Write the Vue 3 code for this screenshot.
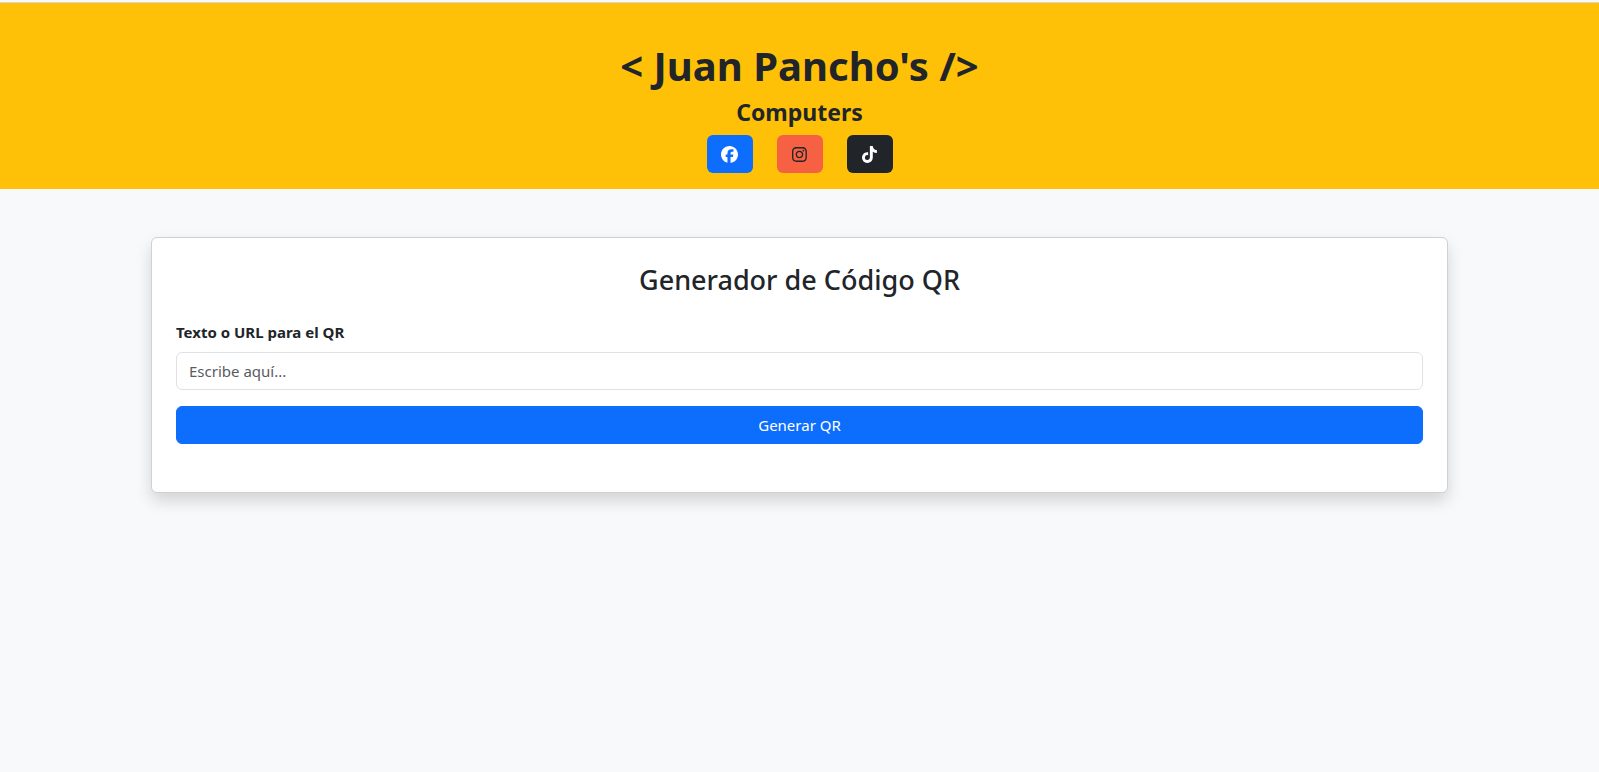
<script setup>
import { ref } from 'vue'

const text = ref('')

const links = [
  {
    name: 'Facebook',
    tone: 'blue',
    box: '0 0 512 512',
    path: 'M512 256C512 114.6 397.4 0 256 0S0 114.6 0 256C0 376 82.7 476.8 194.2 504.5V334.2H141.4V256h52.8V222.3c0-87.1 39.4-127.5 125-127.5c16.2 0 44.2 3.2 55.7 6.4V172c-6-.6-16.5-1-29.6-1c-42 0-58.2 15.9-58.2 57.2V256h83.6l-14.4 78.2H287V510.1C413.8 494.8 512 386.9 512 256h0z'
  },
  {
    name: 'Instagram',
    tone: 'coral',
    box: '0 0 448 512',
    path: 'M224.1 141c-63.6 0-114.9 51.3-114.9 114.9s51.3 114.9 114.9 114.9S339 319.5 339 255.9 287.7 141 224.1 141zm0 189.6c-41.1 0-74.7-33.5-74.7-74.7s33.5-74.7 74.7-74.7 74.7 33.5 74.7 74.7-33.6 74.7-74.7 74.7zm146.4-194.3c0 14.9-12 26.8-26.8 26.8-14.9 0-26.8-12-26.8-26.8s12-26.8 26.8-26.8 26.8 12 26.8 26.8zm76.1 27.2c-1.7-35.9-9.9-67.7-36.2-93.9-26.2-26.2-58-34.4-93.9-36.2-37-2.1-147.9-2.1-184.9 0-35.8 1.7-67.6 9.9-93.9 36.1s-34.4 58-36.2 93.9c-2.1 37-2.1 147.9 0 184.9 1.7 35.9 9.9 67.7 36.2 93.9s58 34.4 93.9 36.2c37 2.1 147.9 2.1 184.9 0 35.9-1.7 67.7-9.9 93.9-36.2 26.2-26.2 34.4-58 36.2-93.9 2.1-37 2.1-147.8 0-184.8zM398.8 388c-7.8 19.6-22.9 34.7-42.6 42.6-29.5 11.7-99.5 9-132.1 9s-102.7 2.6-132.1-9c-19.6-7.8-34.7-22.9-42.6-42.6-11.7-29.5-9-99.5-9-132.1s-2.6-102.7 9-132.1c7.8-19.6 22.9-34.7 42.6-42.6 29.5-11.7 99.5-9 132.1-9s102.7-2.6 132.1 9c19.6 7.8 34.7 22.9 42.6 42.6 11.7 29.5 9 99.5 9 132.1s2.7 102.7-9 132.1z'
  },
  {
    name: 'TikTok',
    tone: 'dark',
    box: '0 0 448 512',
    path: 'M448 209.9a210.1 210.1 0 0 1 -122.8-39.3V349.4A162.6 162.6 0 1 1 185 188.3V278.2a74.6 74.6 0 1 0 52.2 71.2V0l88 0a121.2 121.2 0 0 0 1.9 22.2h0A122.2 122.2 0 0 0 381 102.4a121.4 121.4 0 0 0 67 20.1z'
  }
]
</script>

<template>
  <div class="page">
    <header class="banner">
      <h1 class="brand">&lt; Juan Pancho's /&gt;</h1>
      <p class="tagline">Computers</p>
      <nav class="social">
        <a v-for="link in links" :key="link.name" href="#" class="social-link" :class="link.tone" :aria-label="link.name">
          <svg class="icon" :viewBox="link.box" aria-hidden="true"><path :d="link.path" /></svg>
        </a>
      </nav>
    </header>

    <main class="container">
      <form class="card" @submit.prevent>
        <h2 class="title">Generador de Código QR</h2>
        <label class="label" for="qr-text">Texto o URL para el QR</label>
        <input id="qr-text" v-model="text" class="field" type="text" placeholder="Escribe aquí..." />
        <button class="submit" type="submit">Generar QR</button>
      </form>
    </main>
  </div>
</template>

<style>
body {
  margin: 0;
  background: #f8f9fa;
}
</style>

<style scoped>
.page,
.page * {
  box-sizing: border-box;
}

.page {
  min-height: 100vh;
  border-top: 2px solid #f8f8f8;
  background: #f8f9fa;
  color: #212529;
  font-family: "Segoe UI", "Noto Sans", "Open Sans", sans-serif;
  font-size: 15px;
  line-height: 24px;
}

.banner {
  display: flex;
  flex-direction: column;
  align-items: center;
  gap: 8px;
  padding: 40px 16px 16px;
  border-top: 1px solid #dcd6cc;
  background: #ffc107;
}

.brand,
.tagline,
.title {
  margin: 0;
  text-align: center;
}

.brand {
  font-size: 40px;
  font-weight: 700;
  line-height: 46px;
}

.tagline {
  font-size: 23px;
  font-weight: 700;
  line-height: 30px;
}

.social {
  display: flex;
  gap: 24px;
}

.social-link {
  display: flex;
  align-items: center;
  justify-content: center;
  width: 46px;
  height: 38px;
  border-radius: 6px;
}

.blue {
  background: #0d6efd;
  color: #fff;
}

.coral {
  background: #f66144;
  color: #212529;
}

.dark {
  background: #212529;
  color: #fff;
}

.icon {
  height: 17px;
  fill: currentColor;
}

.container {
  max-width: 1321px;
  margin: 0 auto;
  padding: 48px 12px;
}

.card {
  display: flex;
  flex-direction: column;
  padding: 24px 24px 48px;
  border: 1px solid #d0d1d2;
  border-radius: 6px;
  background: #fff;
  box-shadow: 0 8px 16px rgba(0, 0, 0, 0.15);
}

.title {
  margin-bottom: 22px;
  font-size: 27px;
  font-weight: 500;
  line-height: 36px;
}

.label {
  margin-bottom: 8px;
  font-weight: 700;
}

.field,
.submit {
  width: 100%;
  height: 38px;
  padding: 6px 12px;
  border: 1px solid #dee2e6;
  border-radius: 6px;
  font: inherit;
}

.field {
  margin-bottom: 16px;
  background: #fff;
  color: #212529;
}

.field::placeholder {
  color: #595c5f;
  opacity: 1;
}

.submit {
  border-color: #0d6efd;
  background: #0d6efd;
  color: #fff;
  cursor: pointer;
}
</style>
